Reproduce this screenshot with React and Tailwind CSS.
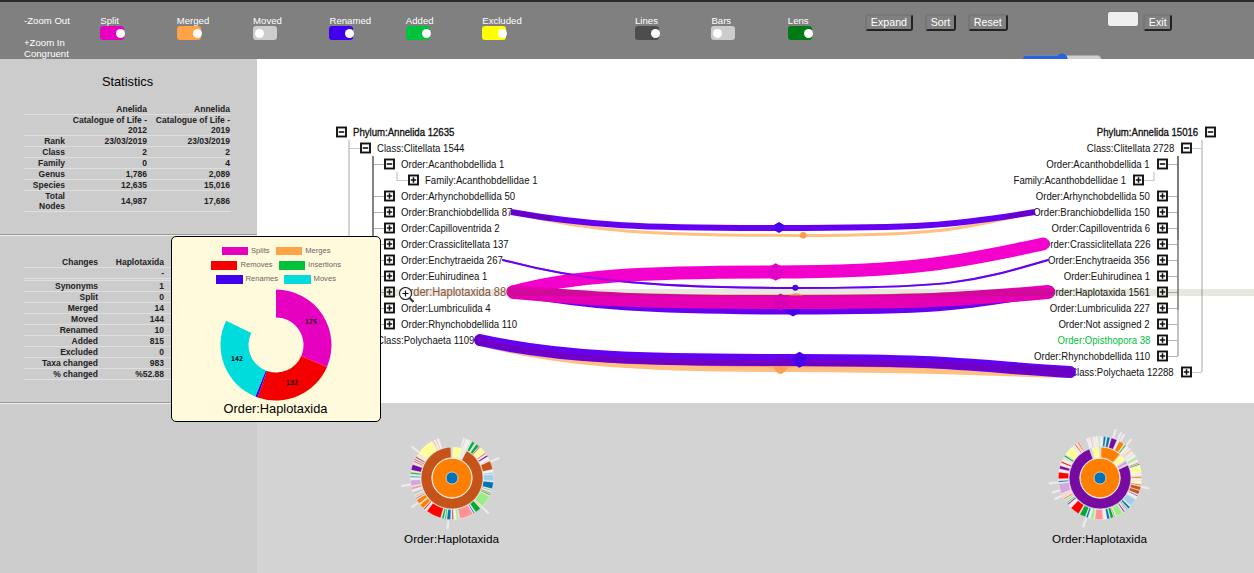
import React from "react";

const toggles = [
  { label: "Split", on: true, color: "bg-[#e600bf]" },
  { label: "Merged", on: true, color: "bg-[#ffa347]" },
  { label: "Moved", on: false, color: "bg-[#cccccc]" },
  { label: "Renamed", on: true, color: "bg-[#4000ee]" },
  { label: "Added", on: true, color: "bg-[#00c23c]" },
  { label: "Excluded", on: true, color: "bg-[#ffff00]" },
  null,
  { label: "Lines", on: true, color: "bg-[#4d4d4d]" },
  { label: "Bars", on: false, color: "bg-[#cccccc]" },
  { label: "Lens", on: true, color: "bg-[#007a14]" },
];

function Toggle({ item }) {
  if (!item) return <div className="w-[76.4px]" />;
  return (
    <div className="w-[76.4px]">
      <div className="h-[11px] whitespace-nowrap text-[9.6px] leading-[11px] text-white">{item.label}</div>
      <div className={`flex h-[14px] w-6 items-center rounded-[3px] ${item.color}`}>
        <div className={`size-[9px] shrink-0 rounded-full bg-white ${item.on ? "ml-4" : "ml-[1.5px]"}`} />
      </div>
    </div>
  );
}

function HeaderButton({ children }) {
  return (
    <button className="block h-[17px] rounded-[3px] border-2 border-t-[#767676] border-r-[#222] border-b-[#222] border-l-[#767676] bg-[#808080] px-[3.8px] text-[10.7px] leading-[13px] text-white">
      {children}
    </button>
  );
}

function Header() {
  return (
    <header className="flex h-[59px] shrink-0 overflow-hidden border-t-2 border-[#2b2b2b] bg-[#808080] pl-6">
      <div className="w-[76px] pt-[13px] text-[9.6px] leading-[11px] text-white">
        <div>-Zoom Out</div>
        <div className="mt-[11px]">+Zoom In</div>
        <div>Congruent</div>
      </div>
      <div className="flex w-[765px] pt-[13px] pl-[0.3px]">
        {toggles.map((t, i) => (
          <Toggle key={i} item={t} />
        ))}
      </div>
      <div className="flex w-[158px] items-start gap-[12px] pt-[12px]">
        <HeaderButton>Expand</HeaderButton>
        <HeaderButton>Sort</HeaderButton>
        <HeaderButton>Reset</HeaderButton>
      </div>
      <div className="flex flex-col">
        <div className="flex h-[51px] shrink-0 items-start pl-[85px]">
          <div className="mt-[10px] mr-[5px] h-[14px] w-[30px] rounded-[2px] bg-[#efefef] shadow-[0_0_1px_#555]" />
          <div className="pt-[12px]">
            <HeaderButton>Exit</HeaderButton>
          </div>
        </div>
        <svg className="block shrink-0" width="80" height="12" viewBox="0 0 80 12">
          <rect x="0.5" y="2.5" width="77.5" height="7" rx="3.5" fill="#cfcfcf" stroke="#aaa" strokeWidth="0.6" />
          <rect x="0" y="2.5" width="42" height="7" rx="3.5" fill="#2a62dd" />
          <circle cx="39" cy="6" r="5.5" fill="#2a62dd" />
        </svg>
      </div>
    </header>
  );
}

const stats = [
  ["", "Anelida", "Annelida"],
  ["", "Catalogue of Life - 2012", "Catalogue of Life - 2019"],
  ["Rank", "23/03/2019", "23/03/2019"],
  ["Class", "2", "2"],
  ["Family", "0", "4"],
  ["Genus", "1,786", "2,089"],
  ["Species", "12,635", "15,016"],
  ["Total Nodes", "14,987", "17,686"],
];

const changes = [
  ["Synonyms", "1"],
  ["Split", "0"],
  ["Merged", "14"],
  ["Moved", "144"],
  ["Renamed", "10"],
  ["Added", "815"],
  ["Excluded", "0"],
  ["Taxa changed", "983"],
  ["% changed", "%52.88"],
];

function ChangeRow({ row }) {
  return (
    <div className="grid h-[11px] grid-cols-[74px_66px] border-b border-[#dfdfdf]">
      <div>{row[0]}</div>
      <div>{row[1]}</div>
    </div>
  );
}

function Sidebar() {
  return (
    <aside className="w-[257px] shrink-0 bg-[#cccccc] text-right text-[8.5px] leading-[10px] font-bold text-[#222]">
      <section className="h-[177px] border-b border-[#eeeeee]">
        <div className="h-[176px] border-b border-[#999] px-6">
          <h2 className="pt-[15px] pr-[2px] text-center text-[12.8px] leading-[16px] font-normal text-black">Statistics</h2>
          <div className="mt-[14px] w-[207px]">
            {stats.map((r, i) => (
              <div key={i} className="grid grid-cols-[41px_82px_83px] items-center border-b border-[#dfdfdf]">
                <div className="pl-2">{r[0]}</div>
                <div className="pl-[5px]">{r[1]}</div>
                <div className="pl-[6px]">{r[2]}</div>
              </div>
            ))}
          </div>
        </div>
      </section>
      <section className="h-[168px] border-b border-[#eeeeee]">
        <div className="h-[167px] border-b border-[#999] pt-[21px] pl-6">
          <ChangeRow row={["Changes", "Haplotaxida"]} />
          <ChangeRow row={["", "-"]} />
          <div className="h-[2px] border-b border-[#dfdfdf]" />
          {changes.map((r) => (
            <ChangeRow key={r[0]} row={r} />
          ))}
        </div>
      </section>
    </aside>
  );
}

const leftTree = [
  [0, "-", "Phylum:Annelida 12635"],
  [1, "-", "Class:Clitellata 1544"],
  [2, "-", "Order:Acanthobdellida 1"],
  [3, "+", "Family:Acanthobdellidae 1"],
  [2, "+", "Order:Arhynchobdellida 50"],
  [2, "+", "Order:Branchiobdellida 87"],
  [2, "+", "Order:Capilloventrida 2"],
  [2, "+", "Order:Crassiclitellata 137"],
  [2, "+", "Order:Enchytraeida 267"],
  [2, "+", "Order:Euhirudinea 1"],
  [2, "+", "Order:Haplotaxida 880", "focus"],
  [2, "+", "Order:Lumbriculida 4"],
  [2, "+", "Order:Rhynchobdellida 110"],
  [1, "+", "Class:Polychaeta 1109"],
];

const rightTree = [
  [0, "-", "Phylum:Annelida 15016"],
  [1, "-", "Class:Clitellata 2728"],
  [2, "-", "Order:Acanthobdellida 1"],
  [3, "+", "Family:Acanthobdellidae 1"],
  [2, "+", "Order:Arhynchobdellida 50"],
  [2, "+", "Order:Branchiobdellida 150"],
  [2, "+", "Order:Capilloventrida 6"],
  [2, "+", "Order:Crassiclitellata 226"],
  [2, "+", "Order:Enchytraeida 356"],
  [2, "+", "Order:Euhirudinea 1"],
  [2, "+", "Order:Haplotaxida 1561"],
  [2, "+", "Order:Lumbriculida 227"],
  [2, "+", "Order:Not assigned 2"],
  [2, "+", "Order:Opisthopora 38", "added"],
  [2, "+", "Order:Rhynchobdellida 110"],
  [1, "+", "Class:Polychaeta 12288"],
];

const indentLeft = ["pl-0", "pl-6", "pl-12", "pl-[72px]"];
const indentRight = ["pr-0", "pr-6", "pr-12", "pr-[72px]"];

function Box({ sign }) {
  return (
    <svg className="block shrink-0" width="12" height="12" viewBox="0 0 12 12">
      <rect x="1" y="1.5" width="9" height="9" fill="#fff" stroke="#111" strokeWidth="1.9" />
      <path d={sign === "+" ? "M2.8 6H8.2M5.5 3.3V8.7" : "M2.8 6H8.2"} stroke="#111" strokeWidth="1.6" />
    </svg>
  );
}

function Tree({ rows, right }) {
  return (
    <div className={right ? "flex flex-col items-end" : "flex flex-col items-start"}>
      {rows.map(([depth, sign, label, state]) => {
        const tone =
          state === "added" ? "text-[#00c23c]" : state === "focus" ? "text-[#96564c]" : "text-[#111]";
        const size = state === "focus" ? "text-[12.7px]" : "text-[11px]";
        const weight = depth === 0 ? "[-webkit-text-stroke:0.35px_#111]" : "";
        return (
          <div
            key={label}
            className={
              right
                ? `flex h-4 flex-row-reverse items-center gap-[7px] ${indentRight[depth]}`
                : `flex h-4 items-center gap-[5px] ${indentLeft[depth]}`
            }
          >
            <Box sign={sign} />
            <span
              className={`scale-x-[0.872] leading-4 whitespace-nowrap ${right ? "origin-right" : "origin-left"} ${tone} ${size} ${weight}`}
            >
              {label}
            </span>
          </div>
        );
      })}
    </div>
  );
}

function hex(cx, cy, r) {
  return [0, 1, 2, 3, 4, 5]
    .map((k) => {
      const a = (k * Math.PI) / 3 + Math.PI / 6;
      return `${(cx + r * Math.cos(a)).toFixed(1)},${(cy + r * Math.sin(a)).toFixed(1)}`;
    })
    .join(" ");
}

function Connectors() {
  const rowsL = [164, 196, 212, 228, 244, 260, 276, 292, 308, 324];
  const rowsR = [164, 196, 212, 228, 244, 260, 276, 292, 308, 324, 340, 356];
  return (
    <svg className="absolute inset-0" width="997" height="344" viewBox="257 59 997 344">
      <g fill="none" stroke="#c8c8c8">
        <path d="M349 140V340" strokeWidth="1.6" />
        <path d="M349 148.5H360M397 172V180.5H408M349 340.5H360" strokeWidth="1.2" />
        <path d="M1202 140V372" strokeWidth="1.6" />
        <path d="M1192 148.5H1202M1154 172V180.5H1144M1192 372.5H1202" strokeWidth="1.2" />
        {rowsL.map((y) => (
          <path key={y} d={`M373 ${y + 0.5}H384`} stroke="#b4b4b4" />
        ))}
        {rowsR.map((y) => (
          <path key={y} d={`M1168 ${y + 0.5}H1178`} stroke="#b4b4b4" />
        ))}
        <path d="M373 156V324" stroke="#777" strokeWidth="1.8" />
        <path d="M1178 156V240" stroke="#6c6c6c" strokeWidth="1.8" />
        <path d="M1178 240V310" stroke="#8c8c8c" strokeWidth="1.8" />
        <path d="M1178 310V356" stroke="#bbb" strokeWidth="1.8" />
      </g>
    </svg>
  );
}

function Links() {
  return (
    <svg className="absolute inset-0" width="997" height="344" viewBox="257 59 997 344">
      <g fill="none" strokeLinecap="round">
        <path d="M511 212C590 232 650 235.5 803 235.5S970 226 1035 212" stroke="#ffc080" strokeWidth="3" strokeLinecap="butt" />
        <path d="M511 212C590 226 640 228 779 228S950 226 1035 212" stroke="#6600f0" strokeWidth="6" strokeLinecap="butt" />
        <path d="M511 212L552 219M1006 217L1035 212" stroke="#6800c4" strokeWidth="4" strokeLinecap="butt" />

        <path d="M503 260C570 278 640 288 795 288S970 283 1048 260" stroke="#6600f0" strokeWidth="2" />
        <path d="M513 292C570 276 640 272 775 272S960 262 1043 244" stroke="#f400cc" strokeWidth="13" />
        <path d="M503 260C570 278 640 288 795 288S970 283 1048 260" stroke="#6600f0" strokeWidth="2" opacity="0.5" />

        <path d="M514 292C590 297 640 299 796 299S960 296 1048 292" stroke="#ffb070" strokeWidth="9" />
        <path d="M514 292C590 305 640 310 793 310S960 306 1048 292" stroke="#6600f0" strokeWidth="9" />
        <polygon points={hex(793, 309, 7.6)} fill="#4800e8" stroke="none" />
        <path d="M514 292C590 299 640 302 780 302S960 300 1048 292" stroke="#e600b4" strokeWidth="14" />

        <path d="M480 341C560 362 640 367 780 367S960 370 1070 373" stroke="#ffc080" strokeWidth="10" />
        <path d="M480 340C560 360 640 363 780 363S960 366 1070 372" stroke="#ff6a78" strokeWidth="7" />
        <path d="M480 340C560 358 640 360 799 360S970 366 1070 372" stroke="#6600f0" strokeWidth="12" />
        <path d="M480 341C560 360.5 640 363 799 363S970 367 1070 372" stroke="#7000c8" strokeWidth="6" />
        <circle cx="480.5" cy="340.5" r="5.8" fill="#6a00c6" stroke="none" />
        <path d="M1010 369L1070 372.2" stroke="#6a00c6" strokeWidth="9" />
      </g>
      <polygon points={hex(779, 227.5, 5.6)} fill="#4a00e8" />
      <circle cx="803.3" cy="235.3" r="3.2" fill="#ff9a45" />
      <polygon points={hex(775.7, 272, 8.8)} fill="#e400c6" />
      <circle cx="795.3" cy="287.7" r="3" fill="#4a00e8" />
      <path d="M789 295.5Q796 291 803 295.5Z" fill="#ffa860" />
      <polygon points={hex(780.5, 302, 8.6)} fill="#dc00b4" />
      <path d="M773 367Q780.5 381 788 367Z" fill="#ff9f50" />
      <polygon points={hex(780.3, 360.5, 6)} fill="#7000c8" opacity="0.6" />
      <polygon points={hex(799.5, 359.8, 8)} fill="#4800e8" />
      <rect x="257" y="289" width="997" height="7" fill="#465000" fillOpacity="0.13" />
    </svg>
  );
}

function arc(r0, r1, a0, a1) {
  const p = (r, a) => {
    const t = (a * Math.PI) / 180;
    return `${(r * Math.sin(t)).toFixed(2)} ${(-r * Math.cos(t)).toFixed(2)}`;
  };
  const big = a1 - a0 > 180 ? 1 : 0;
  return `M${p(r1, a0)}A${r1} ${r1} 0 ${big} 1 ${p(r1, a1)}L${p(r0, a1)}A${r0} ${r0} 0 ${big} 0 ${p(r0, a0)}Z`;
}

const C = {
  y: "#ffff99", g: "#00aa33", G: "#99ee88", r: "#ff0000", p: "#770aa0", b: "#0072b8",
  B: "#a0cfe6", o: "#ff8000", O: "#ffc080", w: "#f3eeea", k: "#ff9096", l: "#d0a8dc", n: "#c4541a",
};

const burstA = {
  base: [20, 342],
  ring: [[28, 358, "n"], [2, 20, "y"], [22, 24, "w"], [25.5, 27, "w"]],
  outer: [
    [20, 23, "w"], [24, 26, "w"], [26.5, 27.5, "B"], [29, 33, "g"], [34, 35, "B"], [36, 40, "g"], [41, 42, "r"], [44, 52, "y"],
    [53, 54, "r"], [55, 56, "w"], [57, 59, "p"], [61, 63, "w"], [66, 78, "n"], [79, 81, "w"], [82, 84, "B"], [85, 94, "B"],
    [96, 105, "b"], [107, 108, "g"], [109, 110, "G"], [111, 112, "r"], [113, 114.5, "g"], [116, 133, "G"], [134.5, 136, "O"],
    [137, 145, "g"], [147, 148.5, "b"], [150, 169, "k"], [170.5, 173.5, "G"], [175, 176.5, "w"], [178, 180, "n"], [182, 187, "b"],
    [188.5, 190, "g"], [191.5, 194, "g"], [196, 217, "r"], [219, 220, "w"], [221, 222.5, "r"], [224, 230, "o"], [232, 238, "o"],
    [240, 241, "p"], [242, 245, "O"], [246.5, 250, "B"], [252, 253, "w"], [254, 257, "k"], [259, 267, "l"], [269, 270, "w"],
    [271, 272.5, "b"], [274, 275, "G"], [276, 278, "g"], [281, 289, "p"], [291, 292, "G"], [293, 294, "r"], [296, 297, "p"],
    [299, 301, "n"], [303, 304, "w"], [307, 331, "y"], [333, 334, "k"], [335, 336, "w"], [337, 338, "k"], [339.5, 341, "w"],
  ],
  spikes: [[17, 32, 42], [67, 42, 51], [134, 42, 51], [185, 43, 51], [234, 42, 50], [261, 42, 51], [308, 42, 51]],
};

const burstB = {
  base: [-19, 330],
  ring: [[65, 340, "p"], [2, 40, "o"], [42, 54, "y"], [56, 63, "l"], [345, 358, "y"]],
  outer: [
    [341, 342, "w"], [344, 345, "w"], [347, 348, "k"], [351, 352.5, "w"], [355, 356, "w"], [358, 359.5, "G"], [2, 3, "w"],
    [5, 8, "b"], [10, 14, "b"], [16, 24, "p"], [26, 27, "w"], [28, 35, "o"], [37, 38.5, "g"], [40, 42, "w"], [47, 49, "O"],
    [52, 53, "w"], [56, 58, "w"], [60, 63, "G"], [65, 66, "w"], [68, 69, "r"], [70, 71.5, "g"], [73, 82, "y"], [84, 86, "w"],
    [88, 90, "o"], [92, 93, "w"], [95, 98, "y"], [99.5, 100.5, "r"], [102, 107, "n"], [108, 113, "n"], [115, 116, "p"],
    [117.5, 119, "w"], [121, 132, "B"], [134, 137, "b"], [138.5, 139.5, "g"], [141, 142, "k"], [143.5, 145, "p"], [147, 157, "G"],
    [159, 160, "n"], [161, 165, "g"], [166.5, 170, "b"], [172, 174, "w"], [176, 187, "k"], [189, 193, "G"], [194.5, 195.5, "w"],
    [197, 199.5, "b"], [201, 209, "g"], [211, 224, "r"], [226, 228, "w"], [230, 231.5, "p"], [233, 234, "g"], [235.5, 238, "G"],
    [239.5, 240.5, "r"], [242, 243.5, "O"], [245, 246, "k"], [248, 262, "l"], [264, 266, "b"], [269, 278, "r"], [280, 281, "w"],
    [283, 287, "p"], [289, 290, "w"], [291.5, 293.5, "r"], [295, 296, "w"], [298, 299, "G"], [301, 303, "g"], [305, 318, "y"],
    [320, 321, "w"], [323, 324, "r"], [325.5, 326.5, "O"], [328, 329, "r"],
  ],
  spikes: [[18, 42, 51], [25, 42, 50], [29, 42, 50], [39, 42, 50], [46, 34, 42], [102, 42, 50], [199, 42, 52], [245, 42, 50], [253, 42, 50], [264, 42, 51]],
};

function Sunburst({ data }) {
  return (
    <div className="flex w-[120px] flex-col items-center">
      <svg className="block" width="108" height="108" viewBox="-54 -54 108 108">
        {data.spikes.map(([a, r0, r1]) => (
          <path key={a} d={arc(r0, r1, a - 1, a + 1)} fill="#eeeaf0" stroke="#f3f0ee" strokeWidth="0.4" />
        ))}
        <path d={arc(31.5, 41.6, data.base[0], data.base[1])} fill="#eee9e6" opacity="0.8" />
        {data.outer.map(([a0, a1, c]) => (
          <path key={a0} d={arc(31.5, 41.6, a0, a1)} fill={C[c]} stroke="#fff" strokeWidth="0.25" />
        ))}
        {data.ring.map(([a0, a1, c]) => (
          <path key={a0} d={arc(20.2, 31, a0, a1)} fill={C[c]} stroke="#eee" strokeWidth="0.7" />
        ))}
        <circle r="19.8" fill="#ff7f00" stroke="#eee" strokeWidth="0.9" />
        <circle r="6" fill="#0072b8" stroke="#ddd" strokeWidth="0.8" />
      </svg>
      <div className="pr-px text-[11.7px] leading-[13px] whitespace-nowrap text-black">Order:Haplotaxida</div>
    </div>
  );
}

const legend = [
  [["Splits", "bg-[#e600bf]"], ["Merges", "bg-[#ffa347]"]],
  [["Removes", "bg-[#f50000]"], ["Insertions", "bg-[#00c23c]"]],
  [["Renames", "bg-[#4000ee]"], ["Moves", "bg-[#00dcdc]"]],
];

function ChartTooltip() {
  return (
    <div className="absolute top-[236px] left-[171px] flex h-[186px] w-[210px] flex-col items-center rounded-[5px] border border-black bg-[#fffadc] pt-[7px]">
      {legend.map((row, i) => (
        <div key={i} className="flex h-[14.2px] items-center gap-[6px]">
          {row.map(([name, color]) => (
            <div key={name} className="flex items-center gap-[3px]">
              <div className={`h-[8.5px] w-[26.5px] ${color}`} />
              <span className="text-[7.6px] leading-[10px] text-[#666]">{name}</span>
            </div>
          ))}
        </div>
      ))}
      <svg className="mt-[2.5px] block shrink-0" width="112" height="112" viewBox="-56 -56 112 112">
        <path d={arc(27.5, 55.5, 0, 113.3)} fill="#e600bf" />
        <path d={arc(27.5, 55.5, 113.3, 199.3)} fill="#f50000" />
        <path d={arc(27.5, 55.5, 199.3, 201.9)} fill="#4000ee" />
        <path d={arc(27.5, 55.5, 201.9, 296)} fill="#00dcdc" />
        <g fontFamily="'DejaVu Sans Mono', monospace" fontWeight="700" fontSize="6.6" textAnchor="middle" fill="#000">
          <text x="35" y="-21.5">175</text>
          <text x="16" y="39.5">132</text>
          <text x="-39" y="16">142</text>
        </g>
      </svg>
      <div className="pr-px text-[12.8px] leading-[15px] whitespace-nowrap text-black">Order:Haplotaxida</div>
    </div>
  );
}

function ZoomCursor() {
  return (
    <svg className="absolute top-[286px] left-[398px]" width="18" height="18" viewBox="0 0 18 18">
      <path d="M11.5 12L15.5 16" stroke="#333" strokeWidth="2.2" />
      <circle cx="7.5" cy="7.5" r="6" fill="#fff" stroke="#222" strokeWidth="1.1" />
      <path d="M4.5 7.5H10.5M7.5 4.5V10.5" stroke="#111" strokeWidth="1.2" />
    </svg>
  );
}

export default function App() {
  return (
    <div className="relative flex h-[573px] w-[1254px] flex-col overflow-hidden bg-white font-['Liberation_Sans',Arial,sans-serif]">
      <Header />
      <div className="flex min-h-0 flex-1">
        <Sidebar />
        <main className="flex flex-1 flex-col">
          <div className="relative h-[344px] bg-white">
            <Connectors />
            <div className="relative flex justify-between pt-[65px] pr-[37px] pl-[79px]">
              <Tree rows={leftTree} />
              <Tree rows={rightTree} right />
            </div>
            <Links />
          </div>
          <div className="flex flex-1 gap-[528px] bg-[#d3d3d3] pt-[21px] pl-[135px]">
            <Sunburst data={burstA} />
            <Sunburst data={burstB} />
          </div>
        </main>
      </div>
      <ChartTooltip />
      <ZoomCursor />
    </div>
  );
}
